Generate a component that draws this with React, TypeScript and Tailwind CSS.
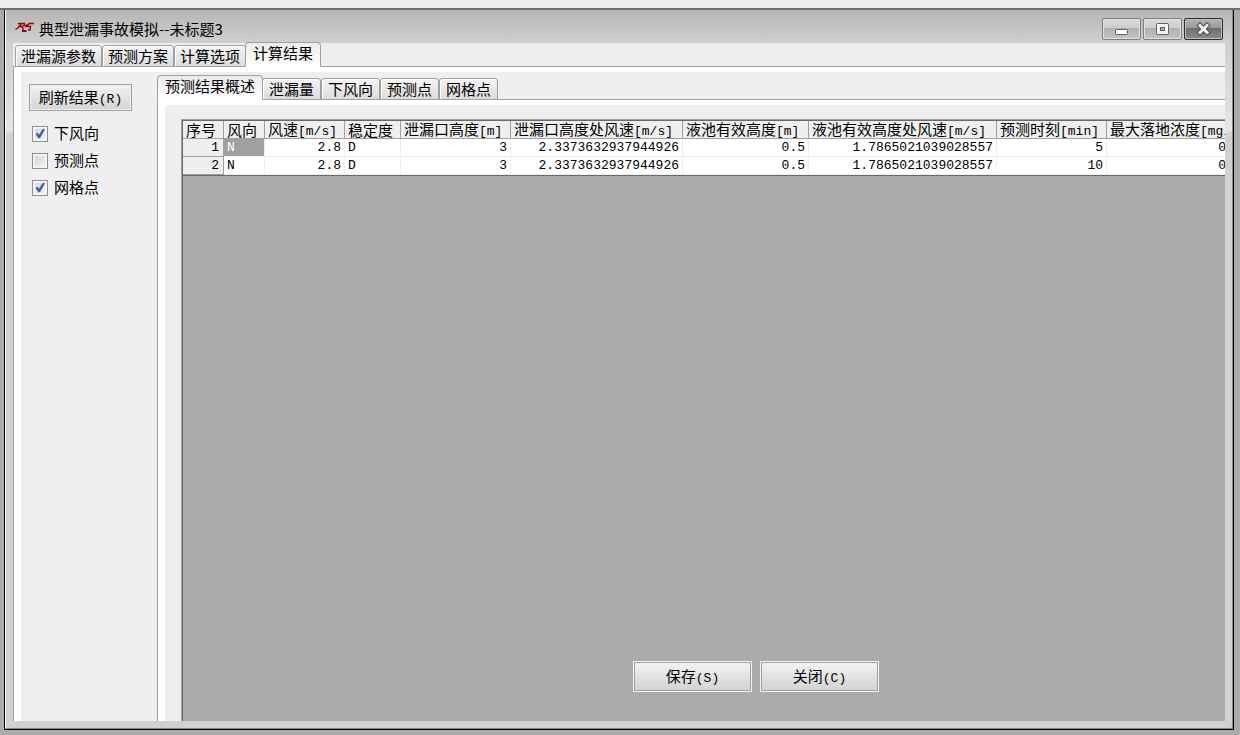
import { useState } from "react";
import type { ReactNode } from "react";
import clsx from "clsx";

const mainTabs = ["泄漏源参数", "预测方案", "计算选项", "计算结果"];
const resultTabs = ["预测结果概述", "泄漏量", "下风向", "预测点", "网格点"];

type Column = { name: string; unit?: string; width: number; left?: boolean };

const columns: Column[] = [
  { name: "风向", width: 41, left: true },
  { name: "风速", unit: "[m/s]", width: 80 },
  { name: "稳定度", width: 56, left: true },
  { name: "泄漏口高度", unit: "[m]", width: 110 },
  { name: "泄漏口高度处风速", unit: "[m/s]", width: 172 },
  { name: "液池有效高度", unit: "[m]", width: 126 },
  { name: "液池有效高度处风速", unit: "[m/s]", width: 188 },
  { name: "预测时刻", unit: "[min]", width: 110 },
  { name: "最大落地浓度", unit: "[mg/m3]", width: 123 },
];

const rows = [
  ["N", "2.8", "D", "3", "2.3373632937944926", "0.5", "1.7865021039028557", "5", "0"],
  ["N", "2.8", "D", "3", "2.3373632937944926", "0.5", "1.7865021039028557", "10", "0"],
];

const Latin = ({ children }: { children: ReactNode }) => (
  <span className="font-['Liberation_Mono',monospace] text-[13px] leading-none">{children}</span>
);

const TabStrip = ({ tabs, initial, className }: { tabs: string[]; initial: string; className?: string }) => {
  const [active, setActive] = useState(initial);

  return (
    <div role="tablist" className={clsx("flex items-end border-b border-[#a0a0a0]", className)}>
      {tabs.map((tab) => (
        <button
          key={tab}
          type="button"
          role="tab"
          aria-selected={tab === active}
          onClick={() => setActive(tab)}
          className={clsx(
            "-mb-px border border-[#a0a0a0] whitespace-nowrap",
            tab === active
              ? "-mx-px h-[25px] rounded-t-[4px] border-b-white bg-linear-to-b from-[#ececec] to-white px-[7px] pb-1 leading-[20px] first:ml-0"
              : "h-[22px] rounded-t-[3px] bg-linear-to-b from-[#f4f4f4] to-[#dcdcdc] px-[5px] leading-[20px] shadow-[inset_1px_1px_0_#fff]"
          )}
        >
          {tab}
        </button>
      ))}
    </div>
  );
};

const CheckRow = ({ label, defaultChecked = false }: { label: string; defaultChecked?: boolean }) => (
  <label className="flex h-[27px] items-center gap-[6px]">
    <span className="relative flex">
      <input
        type="checkbox"
        defaultChecked={defaultChecked}
        className="peer size-4 appearance-none border border-[#8e8f8f] bg-linear-to-br from-[#cfd2d6] to-[#f6f6f6] shadow-[inset_0_0_0_2px_#f4f4f4]"
      />
      <svg viewBox="0 0 16 16" className="pointer-events-none absolute inset-0 hidden size-4 peer-checked:block">
        <path d="M4 8 L5.5 7 L7 9.3 L11 3 L12.5 3.5 L7.8 12 L6.5 12 Z" fill="#42599b" stroke="#42599b" strokeWidth="0.6" />
      </svg>
    </span>
    {label}
  </label>
);

const CaptionButton = ({ label, close, children }: { label: string; close?: boolean; children: ReactNode }) => (
  <button
    type="button"
    aria-label={label}
    className={clsx(
      "flex h-[22px] w-[39px] items-center justify-center rounded-[2px] border",
      close
        ? "border-[#2e2e2e] bg-[linear-gradient(#b4b4b4,#999_45%,#6d6d6d_46%,#8e8e8e)] shadow-[inset_0_0_0_1px_#bcbcbc]"
        : "border-[#7d7d7d] bg-[linear-gradient(#dadada,#cdcdcd_45%,#b0b0b0_46%,#c4c4c4)] shadow-[inset_0_0_0_1px_#e2e2e2]"
    )}
  >
    {children}
  </button>
);

const ActionButton = ({ text, hotkey }: { text: string; hotkey: string }) => (
  <button
    type="button"
    className="h-[31px] w-[119px] border border-[#f4f4f4] bg-linear-to-b from-[#f4f4f4] to-[#d2d2d2] shadow-[inset_0_0_0_1px_#a0a0a0]"
  >
    {text}
    <Latin>({hotkey})</Latin>
  </button>
);

const TitleBar = () => (
  <header className="flex h-[33px] items-center pr-[2px] pl-[2px]">
    <svg viewBox="0 0 20 12" className="h-3 w-5 shrink-0" fill="none" stroke="#8b0a0a" strokeWidth="1.4">
      <path d="M3 2.5 H9.5 L9.5 4 L7 5.5 H3 M6.5 2.5 L3.5 6.5 L0.5 8.5 M6.5 5.5 L8 7 V9" />
      <path d="M19 2.5 H14 L11.5 5.5 H15.5 L15 9 H13 M12 3.5 L10 6" />
      <path d="M7 10 H11.5" strokeWidth="2" />
    </svg>
    <h1 className="ml-1 flex-1 pt-1 leading-5">典型泄漏事故模拟--未标题3</h1>
    <div className="flex gap-[2px] pt-1">
      <CaptionButton label="最小化">
        <svg viewBox="0 0 15 14" className="h-[14px] w-[15px]">
          <rect x="1.5" y="7.5" width="12" height="5" rx="1" fill="#fff" stroke="#5c5f70" />
        </svg>
      </CaptionButton>
      <CaptionButton label="最大化">
        <svg viewBox="0 0 15 14" className="h-[14px] w-[15px]" stroke="#5c5f70">
          <rect x="1.5" y="1.5" width="12" height="11" rx="1" fill="#f4f4f4" />
          <rect x="5.5" y="5.5" width="4" height="3" fill="#b0b0b0" />
        </svg>
      </CaptionButton>
      <CaptionButton label="关闭" close>
        <svg viewBox="0 0 15 14" className="h-[14px] w-[15px]" fill="none" strokeLinecap="square">
          <path d="M4 3.5 L11 10.5 M11 3.5 L4 10.5" stroke="#4b4e5e" strokeWidth="5" />
          <path d="M4 3.5 L11 10.5 M11 3.5 L4 10.5" stroke="#f6f6f6" strokeWidth="3" />
        </svg>
      </CaptionButton>
    </div>
  </header>
);

const ResultTable = () => (
  <table className="w-[1046px] table-fixed border-separate border-spacing-0 border-b border-[#696969] leading-[17px]">
    <colgroup>
      <col style={{ width: 41 }} />
      {columns.map((c) => (
        <col key={c.name} style={{ width: c.width }} />
      ))}
    </colgroup>
    <thead>
      <tr className="bg-[#efefef] text-left leading-[15px]">
        <th className="h-[18px] border-r border-b border-[#a0a0a0] p-0 pl-[3px] font-normal">序号</th>
        {columns.map((c) => (
          <th
            key={c.name}
            className="h-[18px] border-r border-b border-[#a0a0a0] p-0 pl-[3px] font-normal whitespace-nowrap"
          >
            {c.name}
            {c.unit && <Latin>{c.unit}</Latin>}
          </th>
        ))}
      </tr>
    </thead>
    <tbody className="font-['Liberation_Mono',monospace] text-[13px]">
      {rows.map((row, r) => (
        <tr key={r} className="bg-white">
          <th className="h-[18px] border-r border-b border-[#a0a0a0] bg-[#efefef] p-0 pr-1 text-right font-normal">
            {r + 1}
          </th>
          {row.map((value, i) => (
            <td
              key={i}
              className={clsx(
                "h-[18px] border-r border-b border-[#efefef] p-0",
                columns[i].left ? "pl-[3px]" : "pr-[3px] text-right",
                r === 0 && i === 0 && "bg-[#a0a0a0] text-white"
              )}
            >
              {value}
            </td>
          ))}
        </tr>
      ))}
    </tbody>
  </table>
);

export default function App() {
  return (
    <div className="flex h-screen flex-col bg-[#ababab] font-['Noto_Sans_CJK_SC',sans-serif] text-[15px] text-black">
      <div className="h-2 shrink-0 bg-[#efefef]" />
      <div className="flex min-h-0 flex-1 flex-col border-t-2 border-[#707070] pr-[6px] pb-[5px] pl-1">
        <div className="flex min-h-0 flex-1 flex-col border-x border-b border-black">
          <div className="flex min-h-0 flex-1 flex-col border-r border-b border-l border-r-[#8a8a8a] border-b-[#8a8a8a] border-l-white bg-[linear-gradient(#b6b6b6,#cfcfcf_33px,#e6e6e6_120px,#d1d1d1_124px)] px-[7px] pb-[7px]">
            <TitleBar />
            <main className="flex min-h-0 flex-1 flex-col bg-[#efefef]">
              <TabStrip tabs={mainTabs} initial="计算结果" className="h-6 pl-[2px]" />
              <div className="flex min-h-0 flex-1 border-l border-[#a0a0a0] bg-white pt-[5px] pl-[7px]">
                <div className="flex min-w-0 flex-1 bg-[#efefef]">
                  <aside className="w-[136px] shrink-0 pt-3 pl-2">
                    <button
                      type="button"
                      className="mb-[9px] h-[27px] w-[103px] border border-[#a0a0a0] bg-linear-to-b from-[#f2f2f2] to-[#d4d4d4] shadow-[inset_0_0_0_1px_#eee]"
                    >
                      刷新结果<Latin>(R)</Latin>
                    </button>
                    <div className="pl-[3px]">
                      <CheckRow label="下风向" defaultChecked />
                      <CheckRow label="预测点" />
                      <CheckRow label="网格点" defaultChecked />
                    </div>
                  </aside>
                  <section className="flex min-w-0 flex-1 flex-col pt-1">
                    <TabStrip
                      tabs={resultTabs}
                      initial="预测结果概述"
                      className="h-6 [&>button[aria-selected=false]]:px-[6px]"
                    />
                    <div className="flex min-h-0 flex-1 border-l border-[#a0a0a0] bg-white pt-[5px] pl-[7px]">
                      <div className="flex min-w-0 flex-1 bg-[#efefef] pt-[14px] pl-4">
                        <div className="flex min-w-0 flex-1 border-t border-l border-[#a0a0a0]">
                          <div className="flex min-w-0 flex-1 flex-col justify-between overflow-hidden border-t border-l border-[#696969] bg-[#ababab]">
                            <ResultTable />
                            <div className="flex justify-center gap-2 pb-[29px] pl-[104px]">
                              <ActionButton text="保存" hotkey="S" />
                              <ActionButton text="关闭" hotkey="C" />
                            </div>
                          </div>
                        </div>
                      </div>
                    </div>
                  </section>
                </div>
              </div>
            </main>
          </div>
        </div>
      </div>
    </div>
  );
}
